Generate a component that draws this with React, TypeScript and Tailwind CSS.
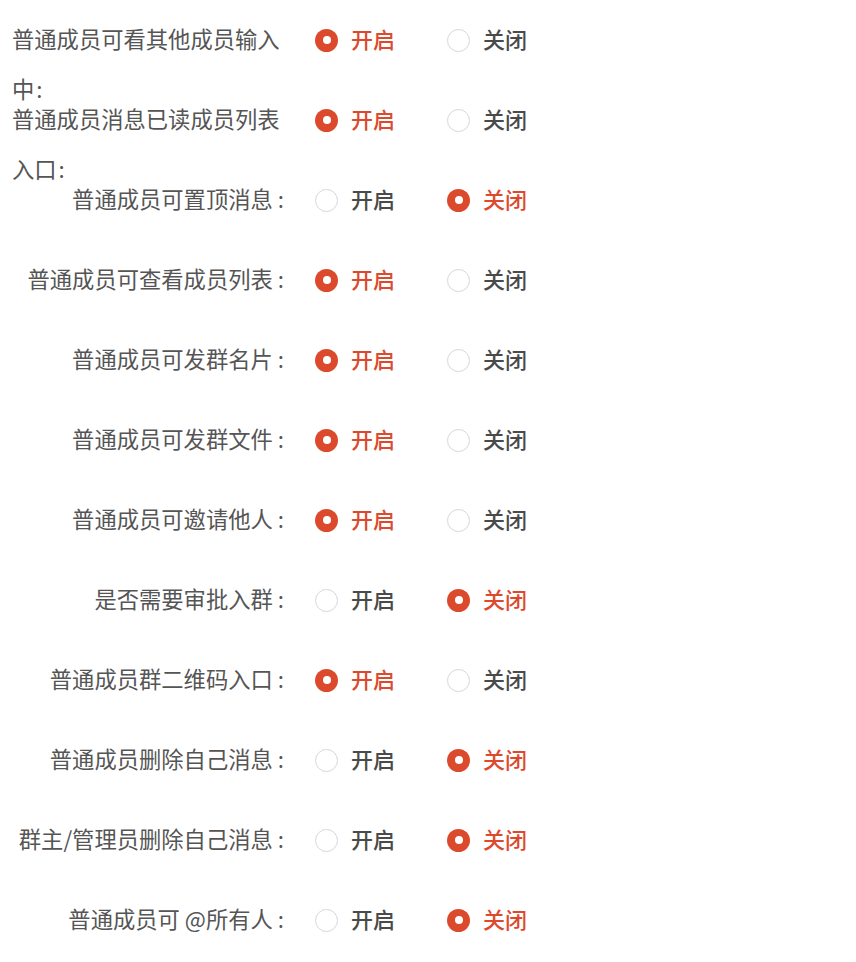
import React from "react";

type Row = { label: string; on: boolean; wrap?: boolean };

const rows: Row[] = [
  { label: "普通成员可看其他成员输入中", on: true, wrap: true },
  { label: "普通成员消息已读成员列表入口", on: true, wrap: true },
  { label: "普通成员可置顶消息", on: false },
  { label: "普通成员可查看成员列表", on: true },
  { label: "普通成员可发群名片", on: true },
  { label: "普通成员可发群文件", on: true },
  { label: "普通成员可邀请他人", on: true },
  { label: "是否需要审批入群", on: false },
  { label: "普通成员群二维码入口", on: true },
  { label: "普通成员删除自己消息", on: false },
  { label: "群主/管理员删除自己消息", on: false },
  { label: "普通成员可 @所有人", on: false },
];

function Radio({ checked, text }: { checked: boolean; text: string }) {
  return (
    <div className="flex items-center">
      {checked ? (
        <span className="flex h-[23px] w-[23px] items-center justify-center rounded-full bg-[#dc4a2d]">
          <span className="h-[8px] w-[8px] rounded-full bg-white" />
        </span>
      ) : (
        <span className="h-[23px] w-[23px] rounded-full border border-[#d6d6de] bg-white" />
      )}
      <span
        className={
          "ml-[13px] pb-[4px] text-[22px] font-medium leading-none " +
          (checked ? "text-[#dc4a2d]" : "text-[#4a4a4a]")
        }
      >
        {text}
      </span>
    </div>
  );
}

export default function App() {
  return (
    <div
      className="min-h-[962px] w-[856px] bg-white"
      style={{ fontFamily: '"Noto Sans CJK SC", "Noto Sans", sans-serif' }}
    >
      {rows.map((r, i) => (
        <div key={i} className="flex h-[80px] items-start">
          <div
            className={
              "ml-[12px] w-[279px] shrink-0 pt-[13px] text-[22.3px] leading-[50px] text-[#555555] " +
              (r.wrap ? "text-left" : "text-right")
            }
          >
            {r.label}
            <span className={(r.wrap ? "ml-[2px]" : "ml-[5px]") + " mr-[7px]"}>:</span>
          </div>
          <div className="flex h-[80px] items-center">
            <div className="ml-[24px] w-[132px]">
              <Radio checked={r.on} text="开启" />
            </div>
            <div>
              <Radio checked={!r.on} text="关闭" />
            </div>
          </div>
        </div>
      ))}
    </div>
  );
}
